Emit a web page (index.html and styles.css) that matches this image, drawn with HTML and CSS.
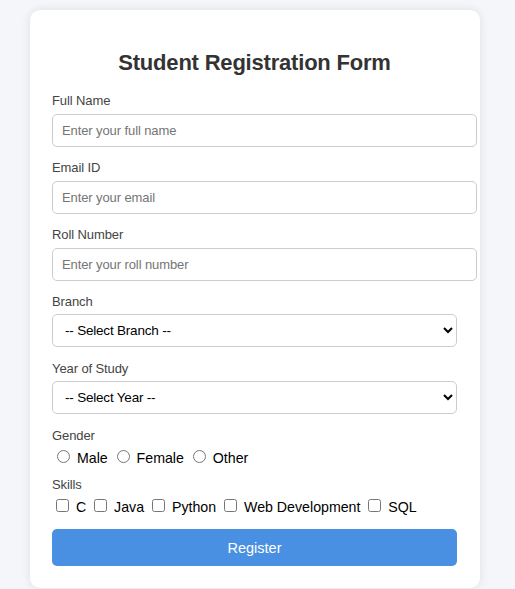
FILE: index.html
```html
<!DOCTYPE html>
<html lang="en">
<head>
<meta charset="utf-8">
<title>Student Registration Form</title>
<link rel="stylesheet" href="styles.css">
</head>
<body>
<div class="card">
  <h2 class="title">Student Registration Form</h2>
  <form class="form">
    <div class="field">
      <label class="label" for="fullname">Full Name</label>
      <input class="text-input" type="text" id="fullname" placeholder="Enter your full name">
    </div>
    <div class="field">
      <label class="label" for="email">Email ID</label>
      <input class="text-input" type="email" id="email" placeholder="Enter your email">
    </div>
    <div class="field">
      <label class="label" for="roll">Roll Number</label>
      <input class="text-input" type="text" id="roll" placeholder="Enter your roll number">
    </div>
    <div class="field field-select">
      <label class="label" for="branch">Branch</label>
      <select class="select" id="branch">
        <option>-- Select Branch --</option>
        <option>CSE</option>
        <option>ECE</option>
        <option>ME</option>
      </select>
    </div>
    <div class="field field-select">
      <label class="label" for="year">Year of Study</label>
      <select class="select" id="year">
        <option>-- Select Year --</option>
        <option>1st Year</option>
        <option>2nd Year</option>
        <option>3rd Year</option>
        <option>4th Year</option>
      </select>
    </div>
    <div class="field field-radio">
      <span class="label label-options">Gender</span>
      <div class="options"><input type="radio" name="gender"> Male <input type="radio" name="gender"> Female <input type="radio" name="gender"> Other</div>
    </div>
    <div class="field field-last">
      <span class="label label-options">Skills</span>
      <div class="options"><input type="checkbox"> C <input type="checkbox"> Java <input type="checkbox"> Python <input type="checkbox"> Web Development <input type="checkbox"> SQL</div>
    </div>
    <button class="btn" type="button">Register</button>
  </form>
</div>
</body>
</html>
```
FILE: styles.css
```css
html, body {
  margin: 0;
  padding: 0;
}
body {
  background: #f4f6f9;
  font-family: "Liberation Sans", Arial, sans-serif;
  height: 589px;
  overflow: hidden;
}
.card {
  width: 405px;
  margin: 10px 0 0 30px;
  padding: 20px 23px 22px 22px;
  background: #ffffff;
  border-radius: 10px;
  box-shadow: 0 0 10px rgba(0, 0, 0, 0.1);
}
.title {
  margin: 20px 0 18px;
  text-align: center;
  font-size: 22px;
  letter-spacing: -0.2px;
  font-weight: bold;
  color: #333333;
  line-height: 25px;
}
.form {
  margin: 0;
}
.field {
  margin-bottom: 13px;
}
.field-select {
  margin-bottom: 14px;
}
.field-radio {
  margin-bottom: 11px;
}
.field-last {
  margin-bottom: 14px;
}
.label {
  display: block;
  margin-bottom: 5px;
  font-size: 13px;
  letter-spacing: -0.1px;
  line-height: 16px;
  color: #444444;
}
.field-select .label {
  margin-bottom: 4px;
}
.label-options {
  margin-bottom: 3px;
}
.text-input {
  display: block;
  width: 100%;
  margin: 0;
  padding: 8px 9px;
  border: 1px solid #cccccc;
  border-radius: 5px;
  font-family: "Liberation Sans", Arial, sans-serif;
  font-size: 13px;
  letter-spacing: -0.1px;
  line-height: 15px;
  height: 15px;
  color: #222222;
  background: #ffffff;
}
.text-input::placeholder {
  color: #757575;
}
.select {
  display: block;
  width: 100%;
  height: 33px;
  margin: 0;
  padding: 0 8px;
  border: 1px solid #cccccc;
  border-radius: 5px;
  background-color: #ffffff;
  font-family: "Liberation Sans", Arial, sans-serif;
  font-size: 13.5px;
  letter-spacing: -0.2px;
  color: #000000;
}
.options {
  font-size: 14.2px;
  color: #000000;
}
.btn {
  display: block;
  width: 100%;
  height: 37px;
  margin: 0;
  padding: 0;
  border: none;
  border-radius: 5px;
  background: #4a90e2;
  color: #ffffff;
  font-family: "Liberation Sans", Arial, sans-serif;
  font-size: 14.5px;
  cursor: pointer;
}
```
